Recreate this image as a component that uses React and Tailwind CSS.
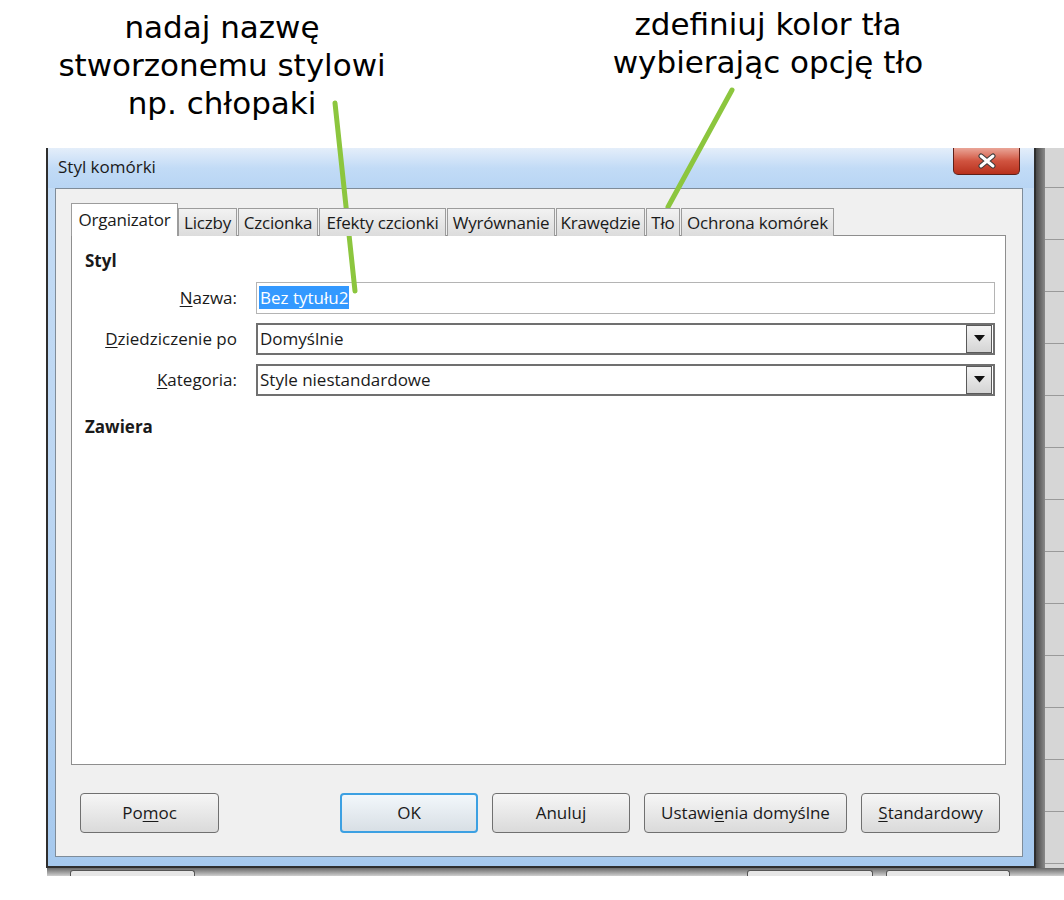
import React from "react";

const ui = { fontFamily: '"Open Sans", "Noto Sans", sans-serif' };
const hand = { fontFamily: '"Comic Sans MS", "DejaVu Sans", sans-serif' };

const tabs = [
  { label: "Liczby", w: "w-[59px]" },
  { label: "Czcionka", w: "w-[80px]" },
  { label: "Efekty czcionki", w: "w-[127px]" },
  { label: "Wyrównanie", w: "w-[108px]" },
  { label: "Krawędzie", w: "w-[89px]" },
  { label: "Tło", w: "w-[34px]" },
  { label: "Ochrona komórek", w: "w-[153px]" },
];

function Annotations() {
  return (
    <div className="flex h-[148px] text-black text-[31px] leading-[38px]" style={hand}>
      <div className="w-[444px] shrink-0 pt-[8px] text-center">
        <div>nadaj nazwę</div>
        <div>stworzonemu stylowi</div>
        <div>np. chłopaki</div>
      </div>
      <div className="w-[620px] shrink-0 pt-[5px] pl-[28px] text-center">
        <div>zdefiniuj kolor tła</div>
        <div>wybierając opcję tło</div>
      </div>
    </div>
  );
}

function Tab({ label, w }) {
  return (
    <div
      className={`${w} h-[28px] mr-[1px] border border-b-0 border-[#9c9c9c] bg-gradient-to-b from-[#f2f2f2] to-[#dcdcdc] flex items-center justify-center text-[17px] text-[#1a1a1a] whitespace-nowrap tracking-[-0.2px]`}
    >
      {label}
    </div>
  );
}

function DropButton() {
  return (
    <div className="w-[26px] h-[28px] my-[1px] mr-[1px] border border-[#5a5a5a] bg-gradient-to-b from-[#f4f4f4] to-[#d4d4d4] flex items-center justify-center">
      <svg width="11" height="7" viewBox="0 0 11 7">
        <path d="M0 0h11L5.5 6.5z" fill="#111" />
      </svg>
    </div>
  );
}

function Field({ under, rest, children, dark, drop }) {
  return (
    <div className="flex items-center">
      <div className="w-[165px] text-right text-[17px] text-[#1a1a1a]">
        <span className="underline underline-offset-2">{under}</span>
        {rest}
      </div>
      <div
        className={`ml-[19px] flex-1 h-[32px] flex items-center bg-white ${
          dark ? "border-2 border-[#707070]" : "border border-[#b4b4b4]"
        }`}
      >
        <div className="flex-1 pl-[2px] text-[17px] text-[#1a1a1a]">{children}</div>
        {drop && <DropButton />}
      </div>
    </div>
  );
}

function Btn({ w, children, ok }) {
  return (
    <div
      className={`${w} h-[40px] rounded-[4px] flex items-center justify-center text-[17px] text-[#1a1a1a] bg-gradient-to-b ${
        ok
          ? "border-2 border-[#3ca0e2] from-[#f2f7fb] to-[#d8dfe5]"
          : "border border-[#707070] from-[#f6f6f6] to-[#dadada]"
      }`}
    >
      {children}
    </div>
  );
}

function CloseButton() {
  return (
    <div className="w-[67px] h-[27px] rounded-b-[5px] border border-t-0 border-[#5e2019] bg-gradient-to-b from-[#e9a598] via-[#d0533f] to-[#b8301c] flex items-center justify-center">
      <svg width="20" height="16" viewBox="0 0 20 16">
        <path d="M4 3l12 10M16 3L4 13" stroke="#3a3a3a" strokeWidth="5" strokeLinecap="round" />
        <path d="M4 3l12 10M16 3L4 13" stroke="#fff" strokeWidth="3" strokeLinecap="round" />
      </svg>
    </div>
  );
}

function Dialog() {
  return (
    <div
      className="w-[990px] shrink-0 border-l-2 border-r-2 border-b-2 border-[#2e2e2e] bg-gradient-to-b from-[#c4dcf5] via-[#bcd6f2] to-[#a6c9ee]"
      style={ui}
    >
      <div className="h-[40px] flex items-start bg-gradient-to-b from-[#e4eefa] via-[#c2dbf6] to-[#b8d5f4]">
        <div className="pl-[10px] pt-[6px] text-[17px] text-[#1a1a1a]">Styl komórki</div>
        <div className="ml-auto mr-[14px]">
          <CloseButton />
        </div>
      </div>
      <div className="pl-[7px] pr-[11px] pb-[9px]">
        <div className="h-[669px] bg-[#f0f0f0] border border-[#7f8c99] flex flex-col pt-[14px] pl-[15px] pr-[16px]">
          <div className="flex items-end h-[33px] relative z-10">
            <div className="w-[107px] h-[33px] border border-b-0 border-[#9c9c9c] bg-white flex items-center justify-center text-[17px] text-[#1a1a1a] tracking-[-0.2px]">
              Organizator
            </div>
            {tabs.map((t) => (
              <Tab key={t.label} {...t} />
            ))}
          </div>
          <div className="-mt-px h-[530px] bg-white border border-[#8e8e8e] pr-[10px]">
            <div className="pl-[13px] pt-[12px] text-[17px] font-bold text-[#1a1a1a]">Styl</div>
            <div className="mt-[8px] flex flex-col gap-[9px]">
              <Field under="N" rest="azwa:">
                <span className="bg-[#3399ff] text-white px-[1px]">Bez tytułu2</span>
              </Field>
              <Field under="D" rest="ziedziczenie po" dark drop>
                Domyślnie
              </Field>
              <Field under="K" rest="ategoria:" dark drop>
                Style niestandardowe
              </Field>
            </div>
            <div className="pl-[13px] pt-[18px] text-[17px] font-bold text-[#1a1a1a]">Zawiera</div>
          </div>
          <div className="mt-[28px] flex pl-[9px] pr-[6px]">
            <Btn w="w-[139px]">
              Po<span className="underline underline-offset-2">m</span>oc
            </Btn>
            <div className="ml-auto flex gap-[14px]">
              <Btn w="w-[138px]" ok>
                OK
              </Btn>
              <Btn w="w-[138px]">Anuluj</Btn>
              <Btn w="w-[203px]">
                Ustawi<span className="underline underline-offset-2">e</span>nia domyślne
              </Btn>
              <Btn w="w-[139px]">
                <span className="underline underline-offset-2">S</span>tandardowy
              </Btn>
            </div>
          </div>
        </div>
      </div>
    </div>
  );
}

function SheetStrip() {
  return (
    <div className="w-[28px] shrink-0 flex">
      <div className="w-[9px] bg-gradient-to-r from-[#4a4a4a] to-[#8a8a8a]" />
      <div className="flex-1 bg-[#d6d6d6] flex flex-col pt-[39px]">
        {Array.from({ length: 14 }).map((_, i) => (
          <div key={i} className="h-[52px] shrink-0 border-t border-[#9a9a9a]" />
        ))}
      </div>
    </div>
  );
}

export default function App() {
  return (
    <div className="relative w-[1064px] h-[900px] bg-white overflow-hidden">
      <Annotations />
      <div className="flex h-[720px]">
        <div className="w-[46px] shrink-0" />
        <Dialog />
        <SheetStrip />
      </div>
      <div className="flex h-[8px]">
        <div className="w-[47px] shrink-0" />
        <div className="w-[1017px] bg-gradient-to-b from-[#6a6a6a] to-[#cfcfcf] flex">
          <div className="ml-[23px] w-[125px] h-[6px] mt-[2px] border border-b-0 border-[#555] rounded-t-[3px] bg-[#e6e6e6]" />
          <div className="ml-[552px] w-[126px] h-[6px] mt-[2px] border border-b-0 border-[#555] rounded-t-[3px] bg-[#e6e6e6]" />
          <div className="ml-[13px] w-[124px] h-[6px] mt-[2px] border border-b-0 border-[#555] rounded-t-[3px] bg-[#e6e6e6]" />
        </div>
      </div>
      <svg className="absolute inset-0 pointer-events-none" width="1064" height="900">
        <path d="M335 103L355 291" stroke="#8cc63e" strokeWidth="5" strokeLinecap="round" />
        <path d="M732 90L668 207" stroke="#8cc63e" strokeWidth="5" strokeLinecap="round" />
      </svg>
    </div>
  );
}
